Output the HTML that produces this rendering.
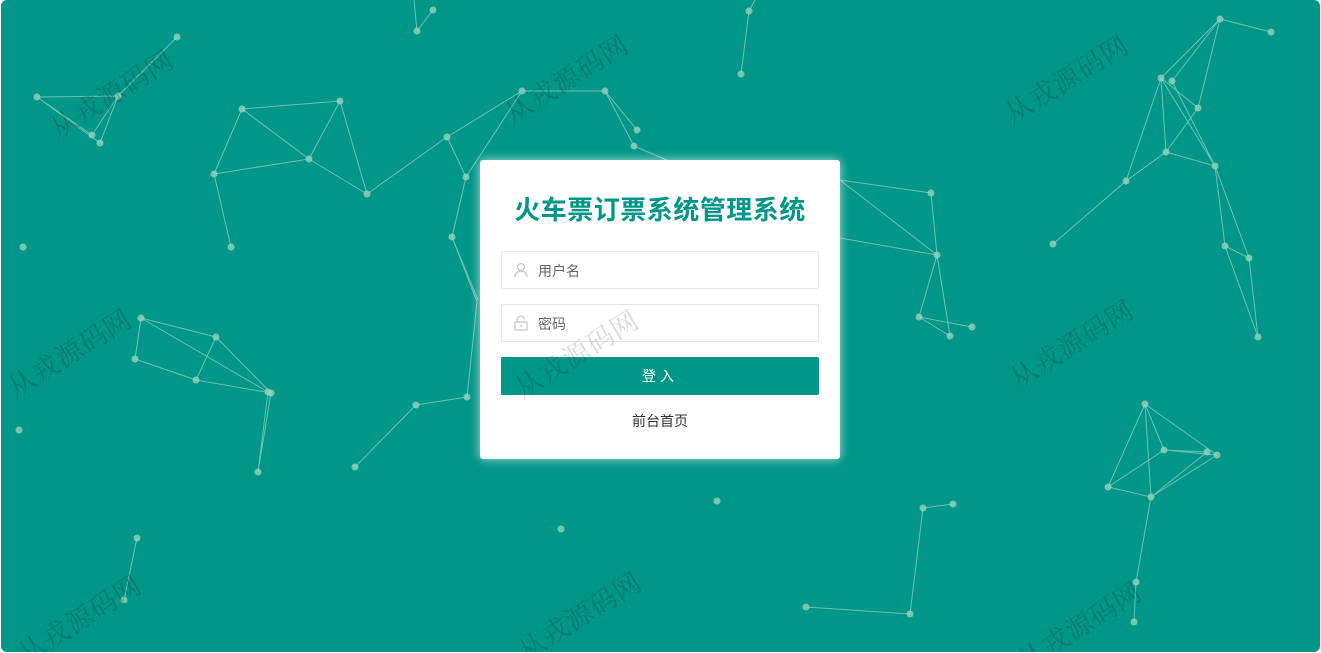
<!DOCTYPE html>
<html><head><meta charset="utf-8"><style>
html,body{margin:0;padding:0;width:1321px;height:653px;background:#fff;overflow:hidden}
.bg{position:absolute;left:1px;top:0;width:1319px;height:652px;background:#009688;border-radius:6px;overflow:hidden}
svg{position:absolute;left:0;top:0}
.wm{position:absolute;font-family:"Noto Serif CJK SC","Liberation Serif",serif;font-size:27px;color:rgba(0,0,0,0.18);transform:rotate(-32deg);transform-origin:left top;white-space:nowrap;letter-spacing:1px}
.card{position:absolute;left:480px;top:160px;width:360px;height:299px;background:#fff;border-radius:3px;box-shadow:0 0 10px rgba(255,255,255,0.7);font-family:"Liberation Sans","Noto Sans CJK SC",sans-serif}
.title{position:absolute;left:0;width:100%;top:30px;text-align:center;font-size:26px;font-weight:bold;color:#009688;letter-spacing:0.5px}
.inp{position:absolute;left:21px;width:316px;height:36px;border:1px solid #e6e6e6;border-radius:2px;font-size:14px;color:#666}
.inp span{position:absolute;left:36px;top:9px}
.inp svg{left:12px;top:10px}
.btn{position:absolute;left:21px;top:197px;width:318px;height:38px;background:#009688;border-radius:2px;color:#fff;font-size:14px;text-align:center;line-height:38px;letter-spacing:4px}
.link{position:absolute;top:251px;width:100%;text-align:center;font-size:14px;color:#333}
</style></head><body>
<div class="bg">
<svg width="1321" height="653" viewBox="1 0 1321 653">
<g stroke="rgba(200,230,220,0.55)" stroke-width="1" fill="none">
<path d="M37 97L118 96L177 37M37 97L92 135M37 97L100 143M118 96L100 143M118 96L92 135"/>
<path d="M242 109L340 101M242 109L309 159M242 109L214 174M214 174L309 159M309 159L340 101M340 101L367 194M309 159L367 194M214 174L231 247M367 194L447 137L522 91L605 91L637 130M605 91L634 146M447 137L466 177M466 177L522 91M466 177L452 237L477 302L467 397L416 405L355 467M452 237L478 300M634 146L690 170"/>
<path d="M840 180L931 193L937 255M840 180L937 255M840 238L937 255M937 255L919 317L950 336M919 317L972 327M937 255L950 336"/>
<path d="M417 31L433 10M417 31L414 0M741 74L749 11L755 0"/>
<path d="M1220 19L1271 32M1220 19L1161 78M1220 19L1172 81M1220 19L1198 108M1161 78L1198 108M1161 78L1166 152M1172 81L1215 166M1161 78L1215 166M1198 108L1166 152M1166 152L1215 166M1161 78L1126 181M1166 152L1126 181M1126 181L1053 244M1215 166L1225 246L1258 337M1215 166L1249 258L1258 337M1225 246L1249 258"/>
<path d="M141 318L216 337L196 380M141 318L135 359L196 380M141 318L268 392M216 337L271 393M196 380L271 393M268 392L258 472M271 393L258 472"/>
<path d="M1145 404L1164 450L1207 452M1145 404L1108 487M1145 404L1151 497M1145 404L1217 455M1108 487L1151 497M1164 450L1217 455M1151 497L1207 452M1151 497L1217 455M1164 450L1108 487M1151 497L1136 582L1134 622"/>
<path d="M806 607L910 614L923 508L953 504M137 538L124 600"/>
</g>
<g fill="rgba(150,210,185,0.8)">
<circle cx="37" cy="97" r="3.5"/><circle cx="118" cy="96" r="3.5"/><circle cx="177" cy="37" r="3.5"/><circle cx="92" cy="135" r="3.5"/><circle cx="100" cy="143" r="3.5"/>
<circle cx="242" cy="109" r="3.5"/><circle cx="340" cy="101" r="3.5"/><circle cx="309" cy="159" r="3.5"/><circle cx="214" cy="174" r="3.5"/><circle cx="231" cy="247" r="3.5"/><circle cx="367" cy="194" r="3.5"/><circle cx="447" cy="137" r="3.5"/><circle cx="466" cy="177" r="3.5"/><circle cx="522" cy="91" r="3.5"/><circle cx="605" cy="91" r="3.5"/><circle cx="637" cy="130" r="3.5"/><circle cx="634" cy="146" r="3.5"/><circle cx="452" cy="237" r="3.5"/><circle cx="467" cy="397" r="3.5"/><circle cx="416" cy="405" r="3.5"/><circle cx="355" cy="467" r="3.5"/>
<circle cx="931" cy="193" r="3.5"/><circle cx="937" cy="255" r="3.5"/><circle cx="919" cy="317" r="3.5"/><circle cx="950" cy="336" r="3.5"/><circle cx="972" cy="327" r="3.5"/>
<circle cx="417" cy="31" r="3.5"/><circle cx="433" cy="10" r="3.5"/><circle cx="741" cy="74" r="3.5"/><circle cx="749" cy="11" r="3.5"/>
<circle cx="1220" cy="19" r="3.5"/><circle cx="1271" cy="32" r="3.5"/><circle cx="1161" cy="78" r="3.5"/><circle cx="1172" cy="81" r="3.5"/><circle cx="1198" cy="108" r="3.5"/><circle cx="1166" cy="152" r="3.5"/><circle cx="1215" cy="166" r="3.5"/><circle cx="1126" cy="181" r="3.5"/><circle cx="1053" cy="244" r="3.5"/><circle cx="1225" cy="246" r="3.5"/><circle cx="1249" cy="258" r="3.5"/><circle cx="1258" cy="337" r="3.5"/>
<circle cx="141" cy="318" r="3.5"/><circle cx="216" cy="337" r="3.5"/><circle cx="135" cy="359" r="3.5"/><circle cx="196" cy="380" r="3.5"/><circle cx="268" cy="392" r="3.5"/><circle cx="271" cy="393" r="3.5"/><circle cx="258" cy="472" r="3.5"/>
<circle cx="1145" cy="404" r="3.5"/><circle cx="1164" cy="450" r="3.5"/><circle cx="1108" cy="487" r="3.5"/><circle cx="1151" cy="497" r="3.5"/><circle cx="1207" cy="452" r="3.5"/><circle cx="1217" cy="455" r="3.5"/><circle cx="1136" cy="582" r="3.5"/><circle cx="1134" cy="622" r="3.5"/>
<circle cx="806" cy="607" r="3.5"/><circle cx="910" cy="614" r="3.5"/><circle cx="923" cy="508" r="3.5"/><circle cx="953" cy="504" r="3.5"/><circle cx="137" cy="538" r="3.5"/><circle cx="124" cy="600" r="3.5"/>
<circle cx="23" cy="247" r="3.5"/><circle cx="19" cy="430" r="3.5"/><circle cx="561" cy="529" r="3.5"/><circle cx="717" cy="501" r="3.5"/>
</g>
</svg>
<div class="wm" style="left:40px;top:113px">从戎源码网</div>
<div class="wm" style="left:495px;top:98px">从戎源码网</div>
<div class="wm" style="left:995px;top:98px">从戎源码网</div>
<div class="wm" style="left:-2px;top:372px">从戎源码网</div>
<div class="wm" style="left:1000px;top:363px">从戎源码网</div>
<div class="wm" style="left:8px;top:638px">从戎源码网</div>
<div class="wm" style="left:508px;top:635px">从戎源码网</div>
<div class="wm" style="left:1008px;top:645px">从戎源码网</div>
</div>
<div class="card">
<div class="title">火车票订票系统管理系统</div>
<div class="inp" style="top:91px"><svg width="14" height="16" viewBox="0 0 14 16"><circle cx="7" cy="5" r="3.5" fill="none" stroke="#c8c8c8" stroke-width="1.3"/><path d="M1 15c0-4 3-6 6-6s6 2 6 6" fill="none" stroke="#c8c8c8" stroke-width="1.3"/></svg><span>用户名</span></div>
<div class="inp" style="top:144px"><svg width="14" height="16" viewBox="0 0 14 16"><path d="M3.5 7V4.5a3.5 3.5 0 0 1 7 0" fill="none" stroke="#c8c8c8" stroke-width="1.3"/><rect x="1" y="7" width="12" height="8" fill="none" stroke="#c8c8c8" stroke-width="1.3"/><path d="M7 10v2" stroke="#c8c8c8" stroke-width="1.5"/></svg><span>密码</span></div>
<div class="btn">登入</div>
<div class="link">前台首页</div>
</div>
<div class="wm" style="left:506px;top:373px;color:rgba(0,0,0,0.15)">从戎源码网</div>
</body></html>
